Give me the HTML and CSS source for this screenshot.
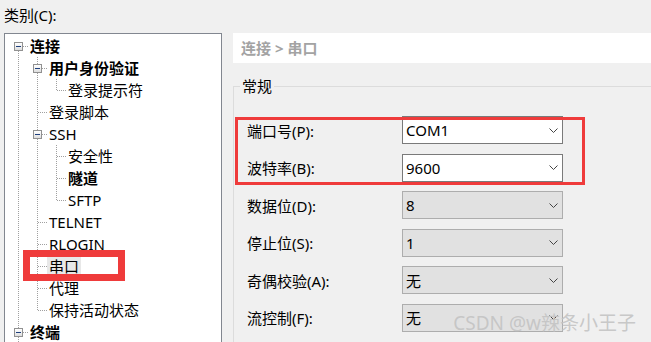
FILE: index.html
```html
<!DOCTYPE html>
<html lang="zh-CN">

<head>
    <meta charset="UTF-8">
    <meta name="viewport" content="width=device-width, initial-scale=1.0">
    <title>会话选项 - 串口</title>
    <link rel="stylesheet" href="styles.css">
</head>

<body>
    <div class="dialog">
        <div class="cat-label">类别(C):</div>

        <div class="main">
            <!-- Category tree -->
            <div class="tree">
                <div class="row"><span class="c tg first"><i></i></span><span class="lbl b">连接</span></div>
                <div class="row"><span class="c pipe"></span><span class="c tg mid"><i></i></span><span class="lbl b">用户身份验证</span></div>
                <div class="row"><span class="c pipe"></span><span class="c pipe"></span><span class="c end"></span><span class="lbl">登录提示符</span></div>
                <div class="row"><span class="c pipe"></span><span class="c tee"></span><span class="lbl">登录脚本</span></div>
                <div class="row"><span class="c pipe"></span><span class="c tg mid"><i></i></span><span class="lbl">SSH</span></div>
                <div class="row"><span class="c pipe"></span><span class="c pipe"></span><span class="c tee"></span><span class="lbl">安全性</span></div>
                <div class="row"><span class="c pipe"></span><span class="c pipe"></span><span class="c tee"></span><span class="lbl b">隧道</span></div>
                <div class="row"><span class="c pipe"></span><span class="c pipe"></span><span class="c end"></span><span class="lbl">SFTP</span></div>
                <div class="row"><span class="c pipe"></span><span class="c tee"></span><span class="lbl">TELNET</span></div>
                <div class="row"><span class="c pipe"></span><span class="c tee"></span><span class="lbl">RLOGIN</span></div>
                <div class="row mark"><span class="c pipe"></span><span class="c tee"></span><span class="lbl sel">串口</span><span class="mark-box"></span></div>
                <div class="row"><span class="c pipe"></span><span class="c tee"></span><span class="lbl">代理</span></div>
                <div class="row"><span class="c pipe"></span><span class="c end"></span><span class="lbl">保持活动状态</span></div>
                <div class="row"><span class="c tg last"><i></i></span><span class="lbl b">终端</span></div>
            </div>

            <!-- Settings pane -->
            <div class="pane">
                <div class="crumb">连接 &gt; 串口</div>

                <fieldset class="group">
                    <legend>常规</legend>
                    <div class="form">
                        <div class="hl-group">
                            <div class="field">
                                <label>端口号(P):</label>
                                <div class="combo"><span>COM1</span><svg width="9" height="5" viewBox="0 0 9 5"><path d="M0.5 0.5L4.5 4.5L8.5 0.5" fill="none" stroke="#444"/></svg></div>
                            </div>
                            <div class="field">
                                <label>波特率(B):</label>
                                <div class="combo"><span>9600</span><svg width="9" height="5" viewBox="0 0 9 5"><path d="M0.5 0.5L4.5 4.5L8.5 0.5" fill="none" stroke="#444"/></svg></div>
                            </div>
                            <div class="hl"></div>
                        </div>
                        <div class="field">
                            <label>数据位(D):</label>
                            <div class="combo off"><span>8</span><svg width="9" height="5" viewBox="0 0 9 5"><path d="M0.5 0.5L4.5 4.5L8.5 0.5" fill="none" stroke="#444"/></svg></div>
                        </div>
                        <div class="field">
                            <label>停止位(S):</label>
                            <div class="combo off"><span>1</span><svg width="9" height="5" viewBox="0 0 9 5"><path d="M0.5 0.5L4.5 4.5L8.5 0.5" fill="none" stroke="#444"/></svg></div>
                        </div>
                        <div class="field">
                            <label>奇偶校验(A):</label>
                            <div class="combo off"><span>无</span><svg width="9" height="5" viewBox="0 0 9 5"><path d="M0.5 0.5L4.5 4.5L8.5 0.5" fill="none" stroke="#444"/></svg></div>
                        </div>
                        <div class="field">
                            <label>流控制(F):</label>
                            <div class="combo off"><span>无</span><svg width="9" height="5" viewBox="0 0 9 5"><path d="M0.5 0.5L4.5 4.5L8.5 0.5" fill="none" stroke="#444"/></svg></div>
                        </div>
                    </div>
                </fieldset>
            </div>
        </div>

        <div class="wm">CSDN @w辣条小王子</div>
    </div>
</body>

</html>
```

FILE: styles.css
```css
/* Basic reset */
* {
    margin: 0;
    padding: 0;
    box-sizing: border-box;
}

html,
body {
    height: 100%;
    overflow: hidden;
}

body {
    background-color: #f0f0f0;
    font-family: "Noto Sans", "Noto Sans CJK SC", sans-serif;
    font-size: 15px;
    color: #000;
}

.dialog {
    position: relative;
    height: 342px;
    padding: 5px 0 0 4px;
}

.cat-label {
    height: 28px;
    line-height: 20px;
}

.main {
    display: flex;
    align-items: flex-start;
}

/* Category tree - runs on below the window edge */
.tree {
    width: 218px;
    height: 309px;
    border: 1px solid #828790;
    border-bottom: none;
    background-color: #fff;
    padding: 1px 0 0 4px;
    overflow: hidden;
}

.row {
    display: flex;
    align-items: center;
    height: 22px;
}

.c {
    flex: none;
    width: 19px;
    height: 22px;
    background-repeat: no-repeat;
}

/* dotted tree lines */
.pipe {
    background-image: repeating-linear-gradient(to bottom, #a0a0a0 0 1px, transparent 1px 2px);
    background-position: 9px 0;
    background-size: 1px 22px;
}

.tee,
.end,
.tg {
    background-image:
        repeating-linear-gradient(to bottom, #a0a0a0 0 1px, transparent 1px 2px),
        repeating-linear-gradient(to right, #a0a0a0 0 1px, transparent 1px 2px);
    background-position: 9px 0, 10px 11px;
    background-size: 1px 22px, 9px 1px;
}

.end {
    background-size: 1px 11px, 9px 1px;
}

.tg.first {
    background-position: 9px 12px, 10px 11px;
    background-size: 1px 10px, 9px 1px;
}

.tg {
    display: flex;
    justify-content: center;
    padding-top: 7px;
}

.tg i {
    display: block;
    width: 9px;
    height: 9px;
    border: 1px solid #919191;
    background:
        linear-gradient(#1e3f7c, #1e3f7c) center / 5px 1px no-repeat,
        linear-gradient(#fff, #dedede);
}

.lbl {
    padding: 0 2px;
    line-height: 18px;
    white-space: nowrap;
}

.lbl.b {
    font-weight: bold;
}

.lbl.sel {
    background-color: #e8e8e8;
}

.mark {
    position: relative;
}

.mark-box {
    position: absolute;
    left: 14px;
    top: -5px;
    width: 102px;
    height: 31px;
    border: 7px solid #ef3b3b;
}

/* Settings pane */
.pane {
    flex: 1;
    min-width: 0;
    margin-left: 11px;
}

.crumb {
    height: 30px;
    line-height: 30px;
    padding-left: 8px;
    background-color: #fff;
    color: #a3a3a3;
    font-weight: bold;
}

/* group box, open to the right and bottom where the window cuts it */
.group {
    margin-top: 13px;
    padding: 20px 0 0 0;
    border: 1px solid #dcdcdc;
    border-right: none;
    border-bottom: none;
    min-width: 0;
    height: 266px;
}

.group legend {
    margin-left: 6px;
    padding: 0 2px;
    line-height: 20px;
}

.form,
.hl-group {
    display: flex;
    flex-direction: column;
    gap: 9.5px;
}

.hl-group {
    position: relative;
}

.field {
    display: flex;
    align-items: center;
    height: 28px;
    padding-left: 13px;
}

.field label {
    width: 155px;
    white-space: nowrap;
}

.combo {
    display: flex;
    align-items: center;
    justify-content: space-between;
    width: 161px;
    height: 28px;
    padding: 0 4px 0 3px;
    border: 1px solid #7a7a7a;
    background-color: #fff;
}

.combo.off {
    background-color: #e1e1e1;
    border-color: #adadad;
}

.hl {
    position: absolute;
    left: 1px;
    top: 1px;
    width: 350px;
    height: 68px;
    border: 3px solid #ef3b3b;
}

/* watermark */
.wm {
    position: absolute;
    right: 15px;
    bottom: 7px;
    font-size: 19px;
    line-height: 24px;
    color: rgba(195, 195, 195, 0.9);
    white-space: nowrap;
}
```
